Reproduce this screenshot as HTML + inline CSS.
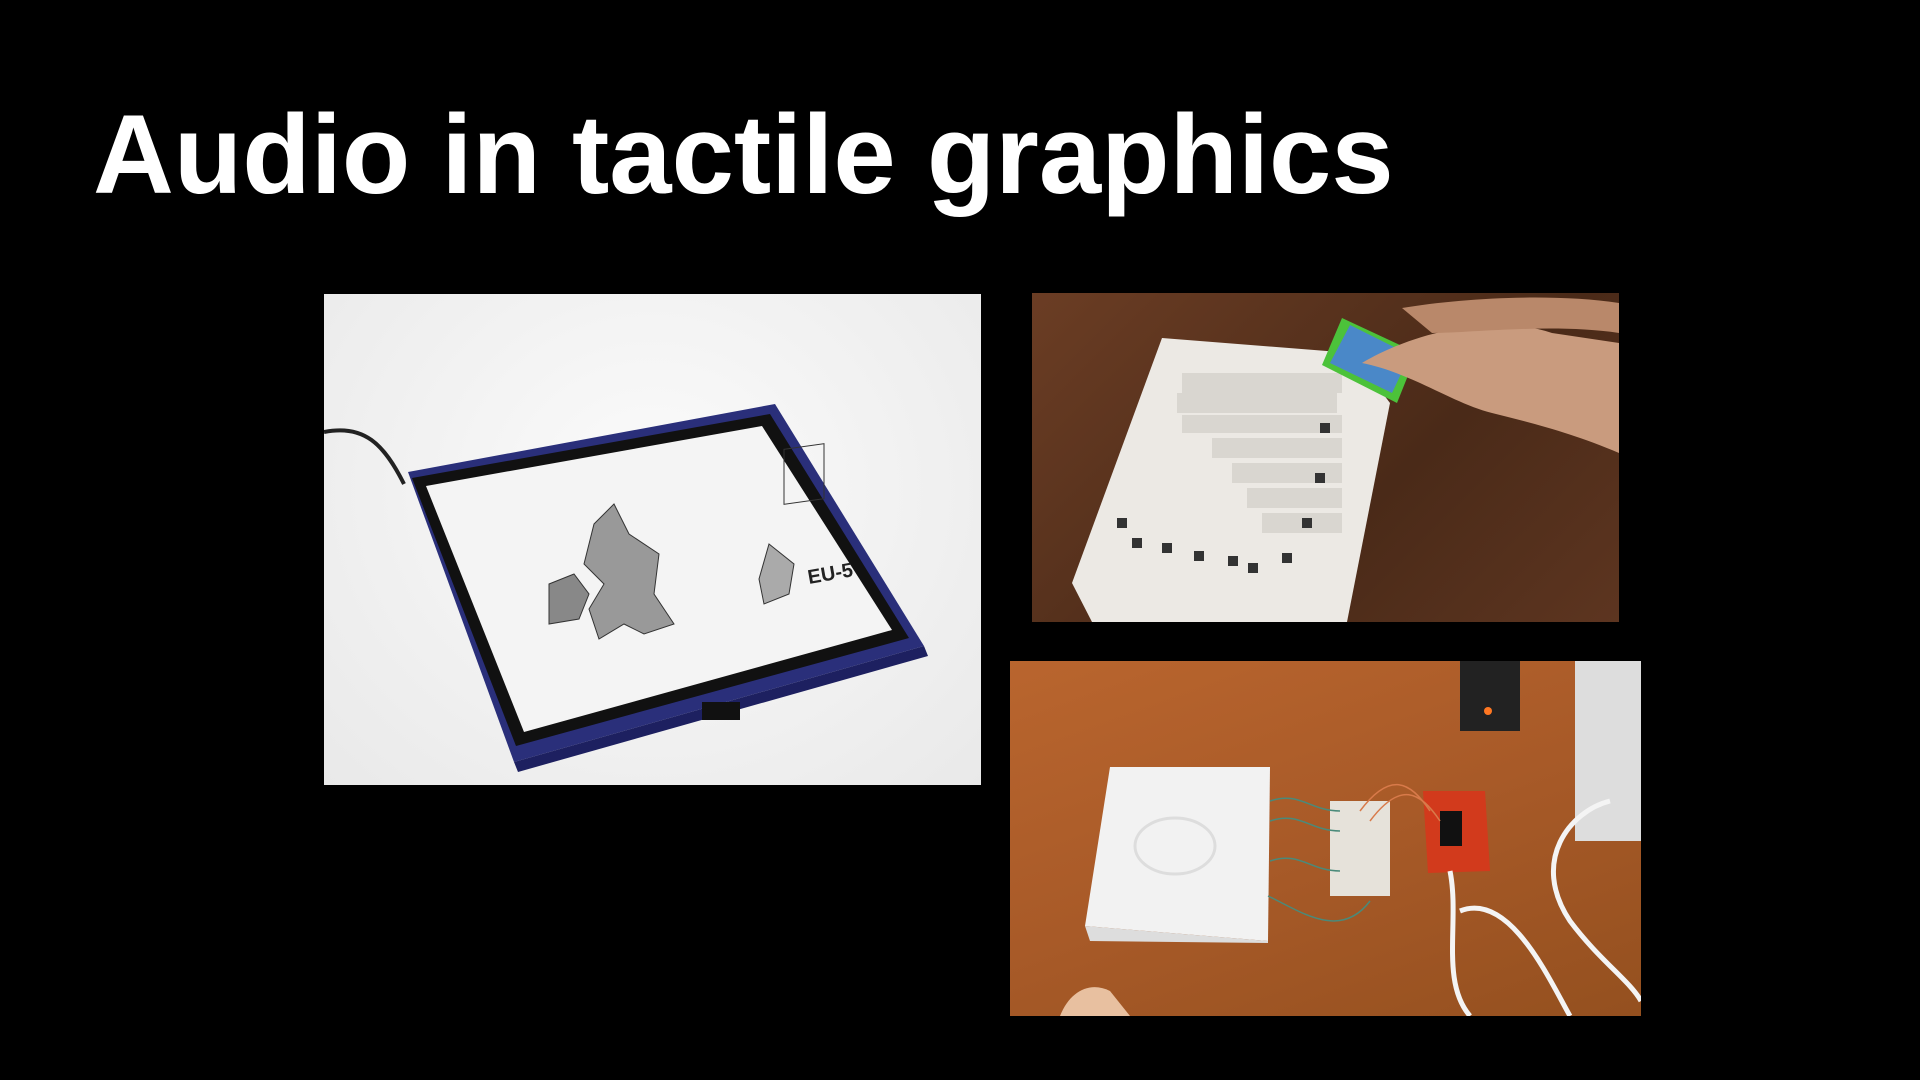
<!DOCTYPE html>
<html><head><meta charset="utf-8"><style>
html,body{margin:0;padding:0;background:#000;width:1920px;height:1080px;overflow:hidden;position:relative}
h1{position:absolute;left:93px;top:99px;margin:0;font:bold 112px/112px "Liberation Sans",Arial,sans-serif;color:#fff;letter-spacing:0}
.p{position:absolute;overflow:hidden}
</style></head><body>
<h1>Audio in tactile graphics</h1>

<div class="p" style="left:324px;top:294px;width:657px;height:491px;background:radial-gradient(ellipse at 50% 40%,#fbfbfb,#e9e9e9)">
<svg width="657" height="491" viewBox="0 0 657 491">
<path d="M0 138 C40 130 60 150 80 190" stroke="#222" stroke-width="4" fill="none"/>
<polygon points="84,178 451,110 600,352 190,468" fill="#2a2f7a"/>
<polygon points="88,184 446,120 585,344 192,452" fill="#111"/>
<polygon points="102,192 438,132 568,336 200,438" fill="#f4f4f4"/>
<polygon points="190,468 600,352 604,362 194,478" fill="#1d2060"/>
<path d="M270 230 l20 -20 15 30 30 20 -5 40 20 30 -30 10 -20 -10 -25 15 -10 -30 15 -25 -20 -20z" fill="#999" stroke="#333"/>
<path d="M225 290 l25 -10 15 20 -10 25 -30 5z" fill="#888" stroke="#333"/>
<path d="M445 250 l25 20 -5 30 -25 10 -5 -25z" fill="#aaa" stroke="#333"/>
<rect x="460" y="220" width="40" height="55" fill="none" stroke="#333" transform="skewY(-8)"/>
<text x="485" y="290" font-family="Liberation Sans" font-weight="bold" font-size="20" fill="#222" transform="rotate(-10 485 290)">EU-5</text>
<rect x="378" y="408" width="38" height="18" fill="#111"/>
</svg></div>

<div class="p" style="left:1032px;top:293px;width:587px;height:329px;background:linear-gradient(135deg,#6b3d24,#4a2a18 60%,#5d3520)">
<svg width="587" height="329" viewBox="0 0 587 329">
<polygon points="130,45 320,60 358,110 315,329 60,329 40,290" fill="#ece9e4"/>
<g fill="#d9d6d0"><rect x="150" y="80" width="160" height="20"/><rect x="145" y="100" width="160" height="20"/><rect x="150" y="122" width="160" height="18"/><rect x="180" y="145" width="130" height="20"/><rect x="200" y="170" width="110" height="20"/><rect x="215" y="195" width="95" height="20"/><rect x="230" y="220" width="80" height="20"/></g>
<g fill="#333"><rect x="85" y="225" width="10" height="10"/><rect x="100" y="245" width="10" height="10"/><rect x="130" y="250" width="10" height="10"/><rect x="162" y="258" width="10" height="10"/><rect x="196" y="263" width="10" height="10"/><rect x="216" y="270" width="10" height="10"/><rect x="250" y="260" width="10" height="10"/><rect x="270" y="225" width="10" height="10"/><rect x="283" y="180" width="10" height="10"/><rect x="288" y="130" width="10" height="10"/></g>
<polygon points="310,25 385,60 365,110 290,72" fill="#4cc23a"/>
<polygon points="318,32 378,62 360,100 298,70" fill="#4a88c8"/>
<path d="M330 70 C380 40 460 20 520 40 L587 50 L587 160 C540 140 500 130 460 120 C420 110 380 80 330 70z" fill="#c99b7e"/>
<path d="M370 15 C430 5 520 0 587 10 L587 40 C520 30 440 40 400 40z" fill="#b9886a"/>
</svg></div>

<div class="p" style="left:1010px;top:661px;width:631px;height:355px;background:linear-gradient(160deg,#b9652e,#a85a28 50%,#94501f)">
<svg width="631" height="355" viewBox="0 0 631 355">
<rect x="565" y="0" width="66" height="180" fill="#ddd"/>
<rect x="450" y="0" width="60" height="70" fill="#222"/>
<circle cx="478" cy="50" r="4" fill="#ff7722"/>
<polygon points="100,106 260,106 258,280 75,265" fill="#f2f2f2"/>
<polygon points="75,265 258,280 258,282 80,280" fill="#ddd"/>
<ellipse cx="165" cy="185" rx="40" ry="28" fill="none" stroke="#ddd" stroke-width="3"/>
<rect x="320" y="140" width="60" height="95" fill="#e6e2da"/>
<polygon points="413,130 475,130 480,210 418,212" fill="#d23a1c"/>
<rect x="430" y="150" width="22" height="35" fill="#111"/>
<g stroke="#4a8a7a" stroke-width="1.5" fill="none"><path d="M260 140 C290 130 300 150 330 150"/><path d="M260 160 C290 150 300 170 330 170"/><path d="M260 200 C290 190 300 210 330 210"/><path d="M258 235 C290 250 330 280 360 240"/></g>
<g stroke="#d87a4a" stroke-width="1.5" fill="none"><path d="M350 150 C380 110 400 120 420 150"/><path d="M360 160 C390 120 410 130 430 160"/></g>
<path d="M440 210 C450 260 430 320 460 355 M600 140 C560 150 520 200 560 260 C590 300 620 320 631 340 M450 250 C500 230 540 320 560 355" stroke="#f4f4f4" stroke-width="5" fill="none"/>
<path d="M50 355 C60 330 80 320 100 330 L120 355z" fill="#e8c0a0"/>
</svg></div>
</body></html>
